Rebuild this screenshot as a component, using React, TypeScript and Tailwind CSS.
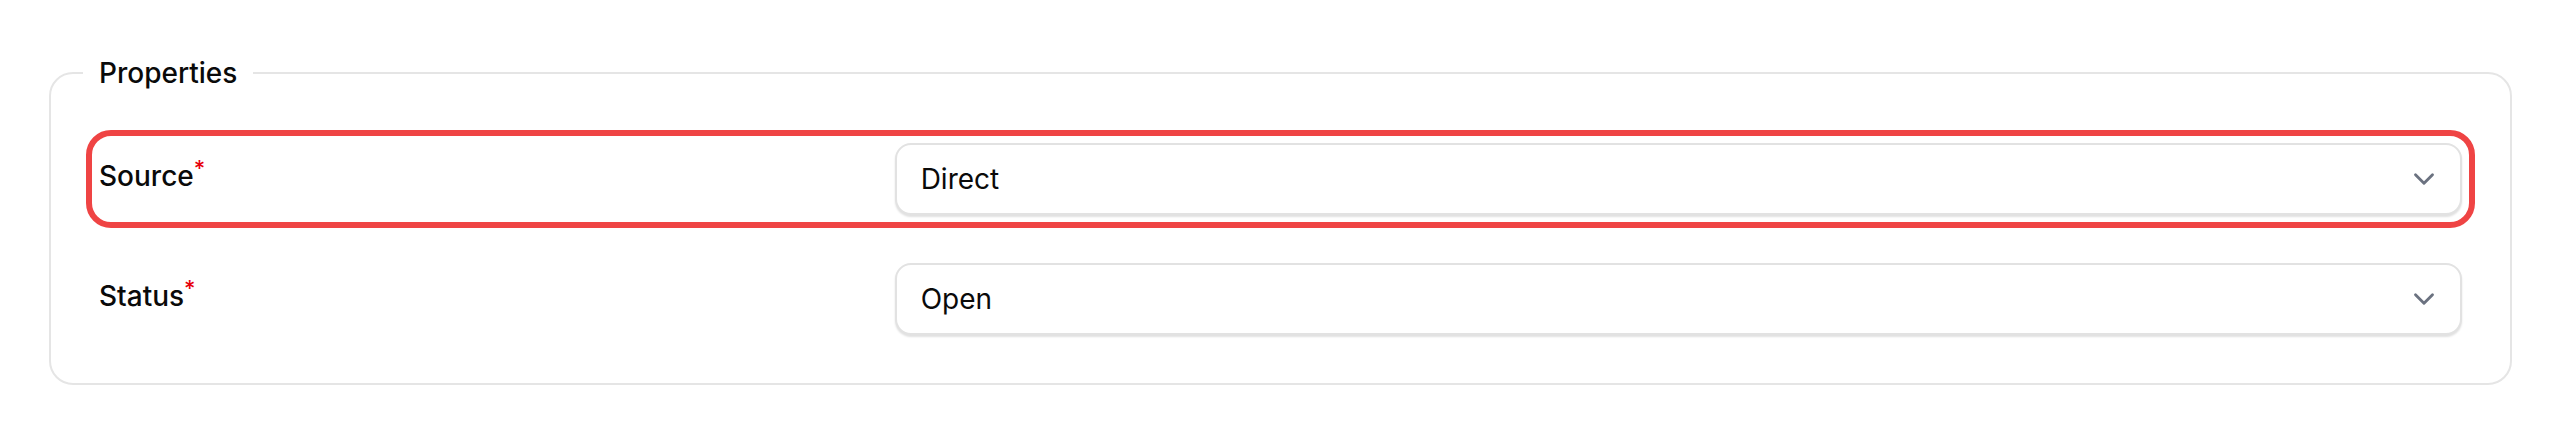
import { ChevronDown } from "lucide-react"

type Field = {
  label: string
  value: string
  highlighted?: boolean
}

const fields: Field[] = [
  { label: "Source", value: "Direct", highlighted: true },
  { label: "Status", value: "Open" },
]

function SelectBox({ value }: { value: string }) {
  return (
    <div className="col-span-2 flex h-[72px] items-center justify-between rounded-[16px] border-2 border-[#e2e2e2] bg-white pl-6 pr-[19px] shadow-[0_2px_2px_rgba(0,0,0,0.12)]">
      <span className="text-[28px] leading-[40px] text-[#0a0a0a]">{value}</span>
      <ChevronDown size={34} strokeWidth={2} className="text-[#6b7280]" />
    </div>
  )
}

export default function App() {
  return (
    <div className="min-h-[434px] bg-white pt-[53px] font-['Inter','Liberation_Sans',sans-serif]">
      <fieldset className="ml-[49px] mr-[48px] rounded-[24px] border-2 border-[#e5e5e5] px-12 pb-12 pt-[50px]">
        <legend className="-ml-4 px-4 text-[28px] font-medium leading-[40px] text-[#0a0a0a]">
          Properties
        </legend>
        <div className="flex flex-col gap-12">
          {fields.map((f) => (
            <div
              key={f.label}
              className={
                f.highlighted
                  ? "grid grid-cols-3 items-start gap-x-6 rounded-[12px] outline-[6px] outline-offset-[7px] outline-[#ef4444] outline-solid"
                  : "grid grid-cols-3 items-start gap-x-6"
              }
            >
              <label className="mt-[13px] text-[28px] font-medium leading-[40px] text-[#0a0a0a]">
                {f.label}
                <span className="relative -top-[10px] text-[22px] text-[#e7000b]">*</span>
              </label>
              <SelectBox value={f.value} />
            </div>
          ))}
        </div>
      </fieldset>
    </div>
  )
}
